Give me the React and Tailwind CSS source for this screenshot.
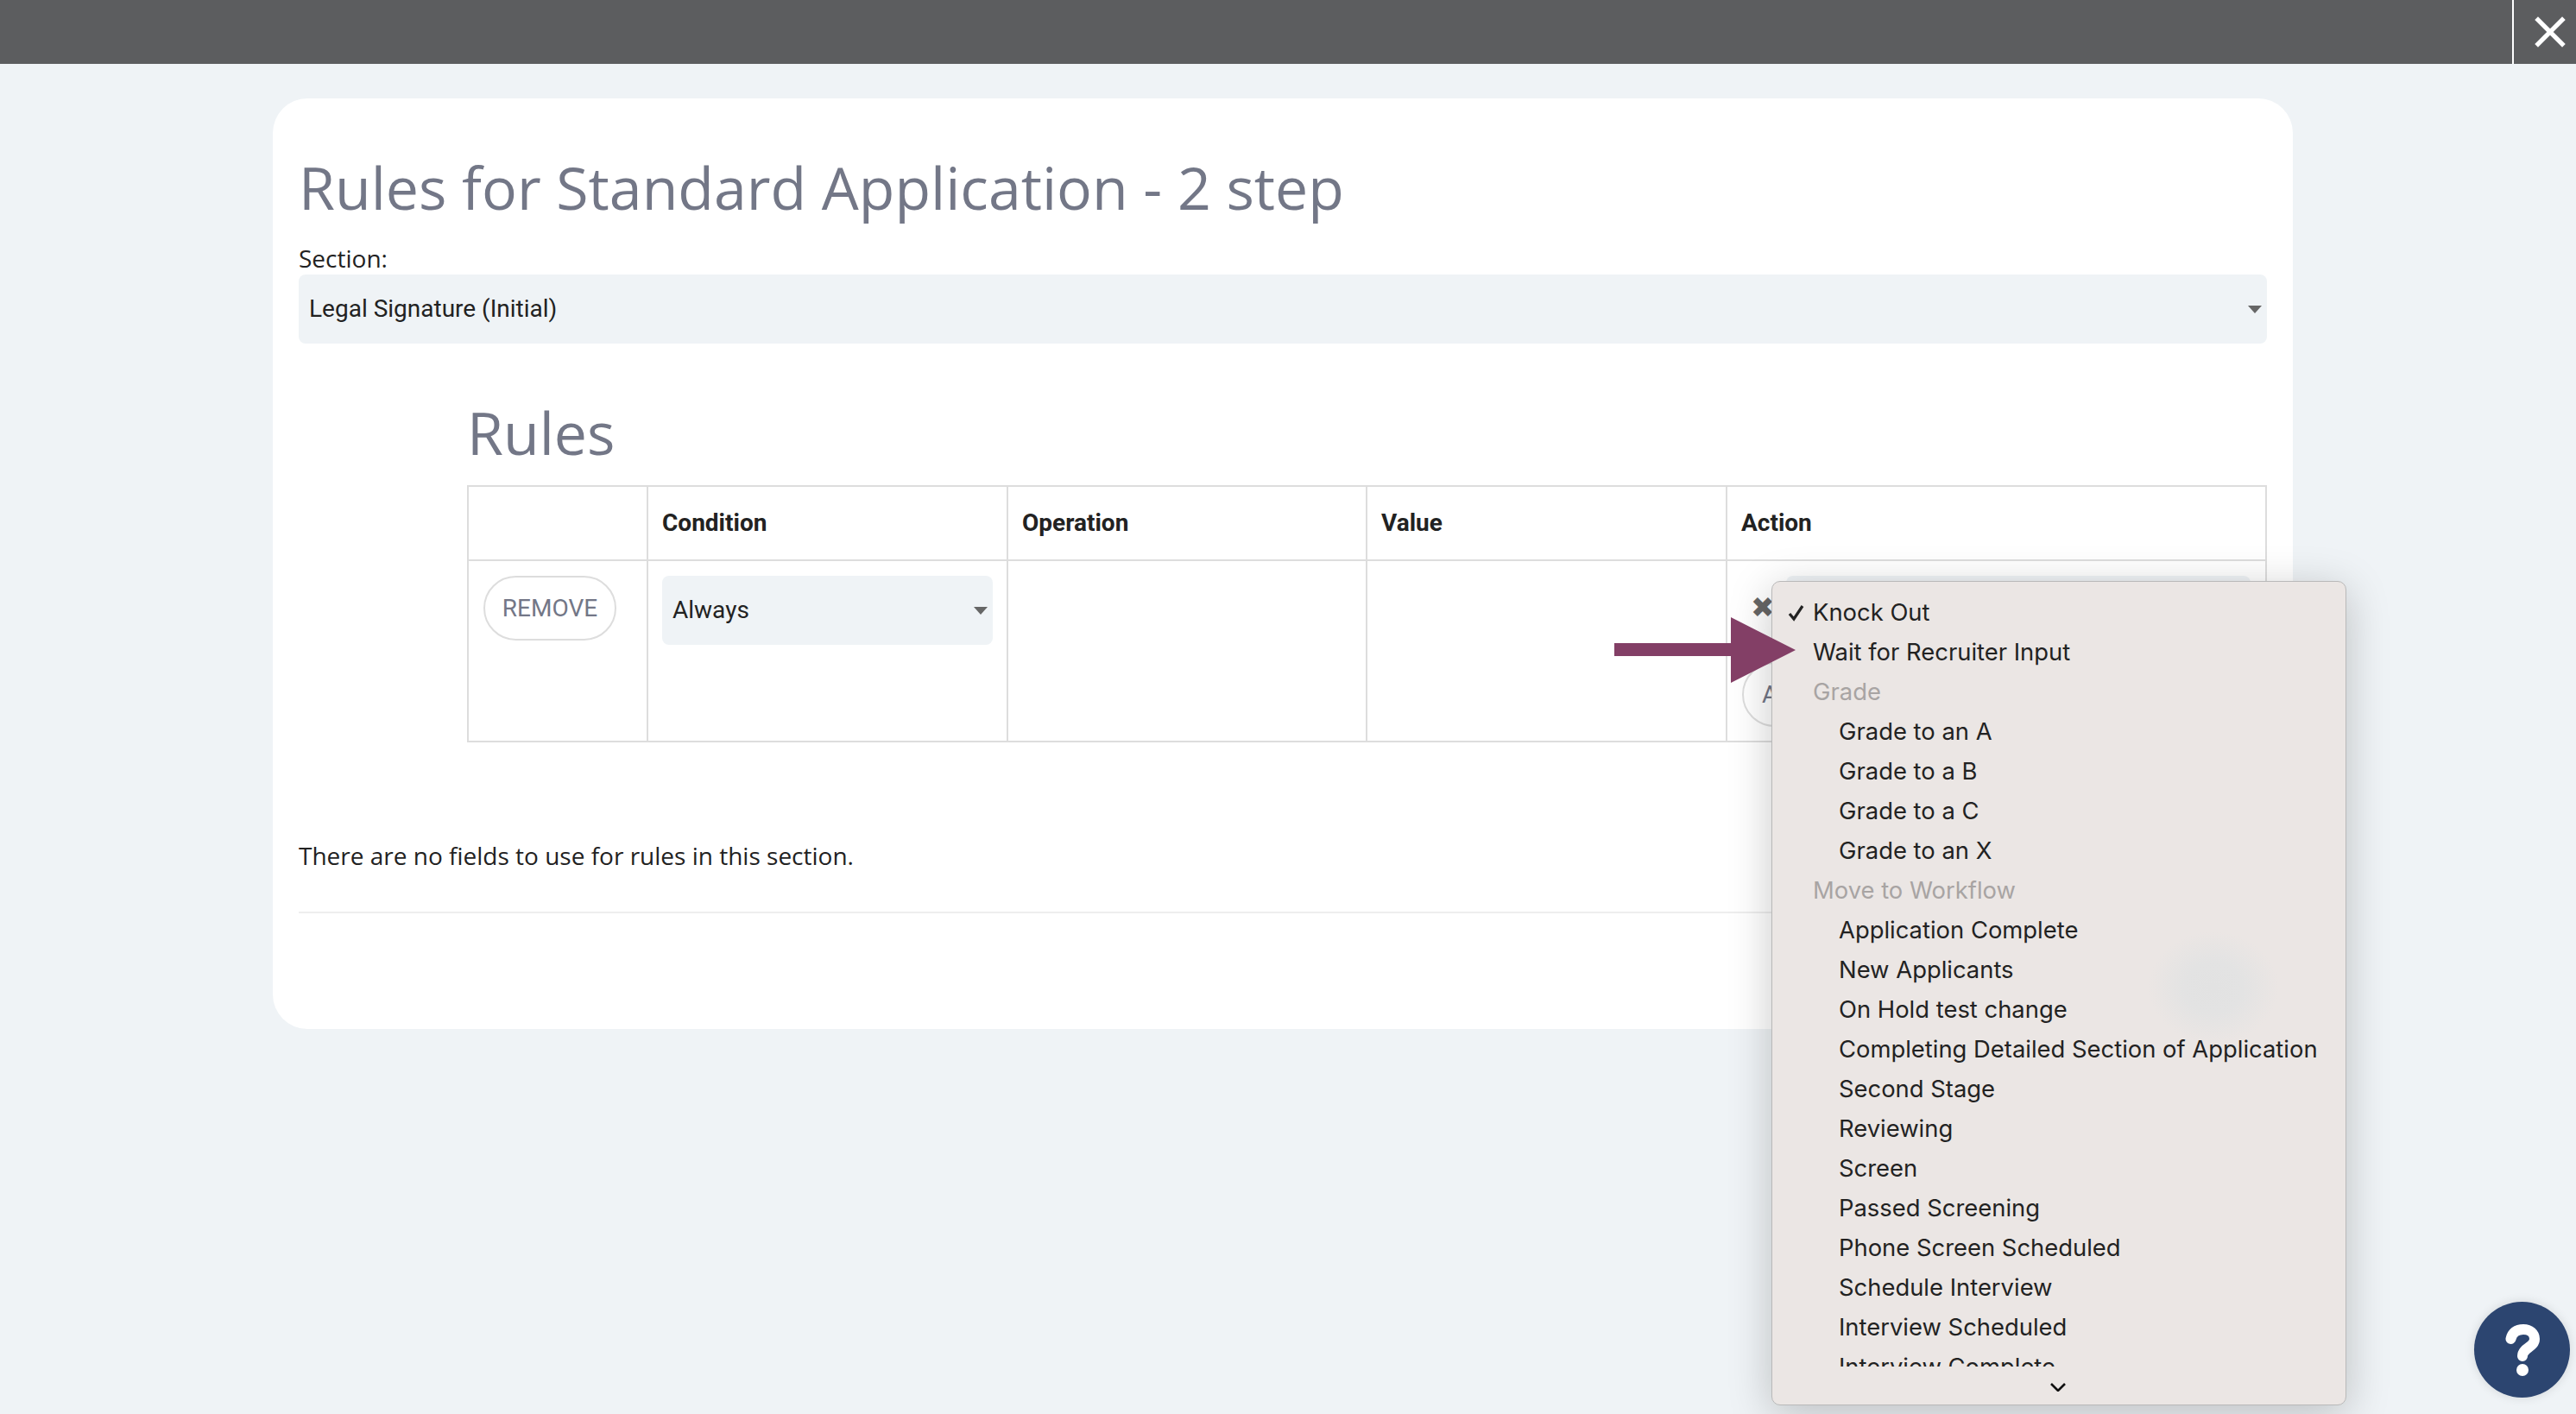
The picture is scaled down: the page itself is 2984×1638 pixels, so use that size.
import React from 'react';

const menuItems = [
  { label: 'Knock Out', checked: true },
  { label: 'Wait for Recruiter Input' },
  { label: 'Grade', group: true },
  { label: 'Grade to an A', child: true },
  { label: 'Grade to a B', child: true },
  { label: 'Grade to a C', child: true },
  { label: 'Grade to an X', child: true },
  { label: 'Move to Workflow', group: true },
  { label: 'Application Complete', child: true },
  { label: 'New Applicants', child: true },
  { label: 'On Hold test change', child: true },
  { label: 'Completing Detailed Section of Application', child: true },
  { label: 'Second Stage', child: true },
  { label: 'Reviewing', child: true },
  { label: 'Screen', child: true },
  { label: 'Passed Screening', child: true },
  { label: 'Phone Screen Scheduled', child: true },
  { label: 'Schedule Interview', child: true },
  { label: 'Interview Scheduled', child: true },
  { label: 'Interview Complete', child: true },
];

const Caret = ({ className }) => (
  <svg viewBox="0 0 16 9" className={`h-[9px] w-4 fill-[#666666] ${className}`}>
    <path d="M0 0h16L8 9z" />
  </svg>
);

const SelectBox = ({ label, className }) => (
  <div
    className={`flex h-20 items-center justify-between rounded-lg bg-[#eff3f6] pl-[12px] pr-[6px] font-['Roboto',sans-serif] text-[28px] text-[#222222] ${className}`}
  >
    <span>{label}</span>
    <Caret />
  </div>
);

const ActionMenu = () => (
  <div className="absolute left-[2052px] top-[673px] h-[955px] w-[666px] rounded-[10px] border border-[#b9b9b9] bg-[#ebe6e4] shadow-[0_10px_50px_rgba(0,0,0,0.22)]">
    <div className="absolute left-[436px] top-[405px] h-[130px] w-[150px] bg-[radial-gradient(closest-side,#e2e2e2_0%,#e3e3e3_45%,#ebe6e4_100%)]" />
    <div className="relative mt-[12px] h-[897px] overflow-hidden font-['Inter',sans-serif] text-[27.4px] leading-[46px] text-[#222222]">
      {menuItems.map((item) => (
        <div
          key={item.label}
          className={`relative h-[46px] whitespace-nowrap ${item.child ? 'pl-[77px]' : 'pl-[47px]'} ${item.group ? 'text-[#a8a4a3]' : ''}`}
        >
          {item.checked && (
            <svg viewBox="0 0 20 20" className="absolute left-[18px] top-[14px] h-5 w-5 fill-none stroke-[#222222] stroke-[3.2]">
              <path d="M2 11l5 6L17 2" />
            </svg>
          )}
          {item.label}
        </div>
      ))}
    </div>
    <svg viewBox="0 0 18 10" className="absolute left-[322px] top-[928px] h-[10px] w-[18px] fill-none stroke-[#111111] stroke-[2.6]">
      <path d="M1 1l8 8 8-8" />
    </svg>
  </div>
);

const App = () => {
  return (
    <div className="relative h-[1638px] overflow-hidden bg-[#eff3f6] font-['Open_Sans',sans-serif]">
      <div className="flex h-[74px] justify-end bg-[#5c5d5f]">
        <button className="flex h-[74px] w-[74px] items-center justify-center border-l-2 border-white pl-[12px]">
          <svg viewBox="0 0 34 34" className="h-[36px] w-[36px] fill-none stroke-white stroke-[5]">
            <path d="M2 2l30 30M32 2L2 32" />
          </svg>
        </button>
      </div>

      <div className="ml-[316px] mt-[40px] h-[1078px] w-[2340px] rounded-[40px] bg-white px-[30px]">
        <h1 className="pt-[56px] text-[68px] leading-[94px] text-[#737787]">Rules for Standard Application - 2 step</h1>
        <div className="mt-[16px] text-[28px] leading-[38px] text-[#222222]">Section:</div>
        <SelectBox label="Legal Signature (Initial)" className="w-[2280px]" />

        <div className="ml-[195px] w-[2083px]">
          <h2 className="mt-[56px] text-[68px] leading-[94px] text-[#737787]">Rules</h2>
          <table className="mt-[14px] w-full table-fixed border-collapse border-2 border-[#dddddd] font-['Roboto',sans-serif] text-[28px] text-[#222222]">
            <colgroup>
              <col className="w-[208px]" />
              <col className="w-[417px]" />
              <col className="w-[416px]" />
              <col className="w-[417px]" />
              <col className="w-[625px]" />
            </colgroup>
            <thead>
              <tr className="h-[86px]">
                <th className="border-2 border-[#dddddd]" />
                {['Condition', 'Operation', 'Value', 'Action'].map((name) => (
                  <th key={name} className="border-2 border-[#dddddd] pl-[16px] text-left font-bold">
                    {name}
                  </th>
                ))}
              </tr>
            </thead>
            <tbody>
              <tr className="h-[210px]">
                <td className="border-2 border-[#dddddd] px-[17px] pt-[17px] align-top">
                  <button className="h-[75px] w-[154px] rounded-full border-2 border-[#dddddd] text-[#737787]">REMOVE</button>
                </td>
                <td className="border-2 border-[#dddddd] px-[16px] pt-[17px] align-top">
                  <SelectBox label="Always" />
                </td>
                <td className="border-2 border-[#dddddd]" />
                <td className="border-2 border-[#dddddd]" />
                <td className="border-2 border-[#dddddd] px-[17px] pt-[17px] align-top">
                  <div className="flex gap-[15px]">
                    <span className="mt-[18px] w-[36px] pl-[10px] text-[33px] leading-[38px] text-[#666666]">✖</span>
                    <div className="h-20 flex-1 rounded-lg bg-[#eff3f6]" />
                  </div>
                  <button className="mt-[20px] h-[75px] w-[160px] rounded-full border-2 border-[#dddddd] pl-[21px] text-left text-[#737787]">ADD</button>
                </td>
              </tr>
            </tbody>
          </table>
        </div>

        <p className="mt-[112px] text-[28px] leading-[38px] text-[#222222]">There are no fields to use for rules in this section.</p>
        <hr className="mt-[46px] border-t-2 border-[#eeeeee]" />
      </div>

      <ActionMenu />

      <svg viewBox="0 0 210 76" className="absolute left-[1870px] top-[715px] h-[76px] w-[210px] fill-[#833f66]">
        <path d="M0 30h135V0l75 38-75 38V45H0z" />
      </svg>

      <button className="absolute left-[2866px] top-[1508px] flex h-[111px] w-[111px] items-center justify-center rounded-full bg-[#2c4570] shadow-[0_0_12px_rgba(0,0,0,0.12)]">
        <svg viewBox="0 0 40 60" className="h-[60px] w-10">
          <path d="M6.5 17C8 10 13 6 21 6c8 0 13 5 13 11 0 10-14 10-14 20" className="fill-none stroke-white stroke-[12]" strokeLinecap="round" />
          <circle cx="20" cy="53" r="7" className="fill-white" />
        </svg>
      </button>
    </div>
  );
};

export default App;
